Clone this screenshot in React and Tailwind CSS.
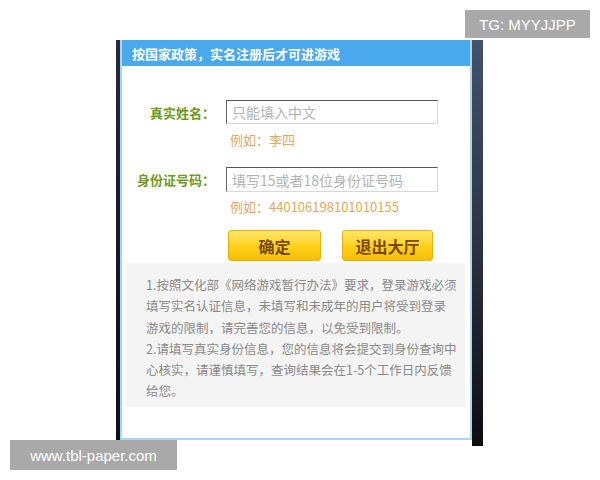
export default function App() {
  const cjk = { fontFamily: '"Noto Sans CJK SC", "Noto Sans", sans-serif' };
  return (
    <div className="relative w-[600px] h-[480px] bg-white overflow-hidden" style={cjk}>
      <div className="ml-[116px] mt-[40px] flex w-[367px] h-[406px]">
        <div className="w-[4px] h-[400px] bg-gradient-to-b from-[#222c3e] via-[#141a26] to-[#0c1018]" />
        <div className="w-[352px] h-[400px] border-2 border-t-0 border-[#a9d6f2] bg-white flex flex-col">
          <div className="h-[26px] bg-[#4aa8ec] flex items-center pl-[10px] text-white text-[13px] font-bold leading-none">
            按国家政策，实名注册后才可进游戏
          </div>
          <div className="mt-[34px] flex items-center">
            <div className="w-[93px] text-right text-[13px] font-bold text-[#6f9a1c] leading-none">真实姓名：</div>
            <div className="ml-[11px] w-[212px] h-[24px] border border-t-[#555] border-l-[#666] border-r-[#d8d8d8] border-b-[#d8d8d8] flex items-center pl-[5px] text-[14px] text-[#b4b4b4] leading-none">
              只能填入中文
            </div>
          </div>
          <div className="mt-[6px] pl-[108px] text-[13px] leading-[20px] text-[#e2a862]">例如：李四</div>
          <div className="mt-[17px] flex items-center">
            <div className="w-[93px] text-right text-[13px] font-bold text-[#6f9a1c] leading-none">身份证号码：</div>
            <div className="ml-[11px] w-[212px] h-[25px] border border-t-[#555] border-l-[#666] border-r-[#d8d8d8] border-b-[#d8d8d8] flex items-center pl-[5px] text-[14px] text-[#b4b4b4] leading-none">
              填写15或者18位身份证号码
            </div>
          </div>
          <div className="mt-[5px] pl-[108px] text-[13px] leading-[20px] text-[#e2a862]">例如：440106198101010155</div>
          <div className="mt-[13px] pl-[106px] flex gap-[21px]">
            <div className="w-[93px] h-[31px] rounded-[3px] border border-[#e7b20a] bg-gradient-to-b from-[#ffe866] via-[#ffd21c] to-[#f6bd00] flex items-center justify-center text-[16px] font-bold text-[#7a4808] leading-none">
              确定
            </div>
            <div className="w-[91px] h-[31px] rounded-[3px] border border-[#e7b20a] bg-gradient-to-b from-[#ffe866] via-[#ffd21c] to-[#f6bd00] flex items-center justify-center text-[16px] font-bold text-[#7a4808] leading-none">
              退出大厅
            </div>
          </div>
          <div className="mt-[2px] ml-[4px] mr-[5px] h-[144px] bg-[#f4f4f4] pl-[20px] pt-[11px] text-[12.5px] leading-[21.3px] text-[#8a8a8a] whitespace-nowrap">
            1.按照文化部《网络游戏暂行办法》要求，登录游戏必须<br />
            填写实名认证信息，未填写和未成年的用户将受到登录<br />
            游戏的限制，请完善您的信息，以免受到限制。<br />
            2.请填写真实身份信息，您的信息将会提交到身份查询中<br />
            心核实，请谨慎填写，查询结果会在1-5个工作日内反馈<br />
            给您。
          </div>
        </div>
        <div className="w-[11px] h-[406px] bg-gradient-to-b from-[#42536c] via-[#2a3446] to-[#0d0d10]" />
      </div>
      <div className="absolute left-[465px] top-[10px] w-[125px] h-[28px] bg-[#a9a9a9] flex items-center justify-center text-white text-[15px] leading-none" style={{ fontFamily: '"Liberation Sans", Arial, sans-serif' }}>
        TG: MYYJJPP
      </div>
      <div className="absolute left-[10px] top-[440px] w-[167px] h-[30px] bg-[#a9a9a9] flex items-center justify-center text-white text-[15px] leading-none" style={{ fontFamily: '"Liberation Sans", Arial, sans-serif' }}>
        www.tbl-paper.com
      </div>
    </div>
  );
}
